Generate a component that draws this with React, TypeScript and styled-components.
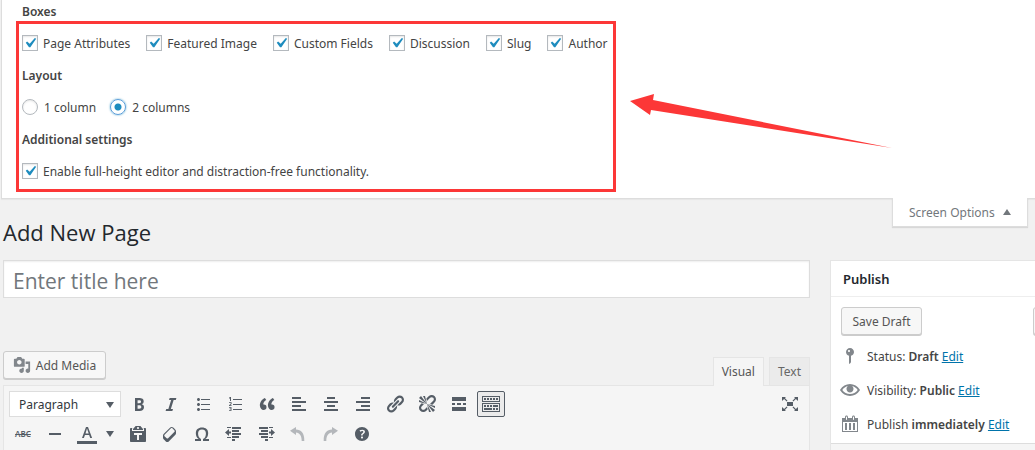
import React from 'react';
import styled, { createGlobalStyle, css } from 'styled-components';

const GlobalStyle = createGlobalStyle`
  *, *::before, *::after { box-sizing: border-box; }
  body {
    margin: 0;
    background: #f1f1f1;
    color: #444;
    font: 12px/20px "Segoe UI", "Noto Sans", sans-serif;
    overflow: hidden;
  }
  h1, h2, h3, p, fieldset, legend, ul { margin: 0; padding: 0; }
  button, input, select { font: inherit; color: inherit; margin: 0; }
`;

const Page = styled.div`
  display: flex;
  flex-direction: column;
  min-height: 100vh;
`;

/* Text beside an icon or a control, set on the control's baseline */
const Label = styled.span`
  padding-top: 2px;
  white-space: nowrap;
`;

/* Screen options */

const OptionsPanel = styled.section`
  position: relative;
  display: flex;
  flex-direction: column;
  gap: 10px;
  margin-left: 1px;
  padding: 0 20px 16px;
  background: #fff;
  border: 1px solid #ddd;
  border-width: 0 0 1px 1px;
  box-shadow: 0 1px 1px rgba(0, 0, 0, 0.04);
`;

const GroupTitle = styled.h3`
  height: 22px;
  font-size: 12px;
  line-height: 24px;
  font-weight: 600;
`;

const OptionRow = styled.div<{ $gap: number }>`
  display: flex;
  align-items: center;
  gap: ${(p) => p.$gap}px;
  height: 22px;
`;

const Option = styled.label<{ $gap?: number }>`
  display: flex;
  align-items: center;
  gap: ${(p) => p.$gap ?? 5}px;
`;

const Tick = styled.span`
  position: relative;
  display: flex;
  width: 16px;
  height: 16px;

  svg {
    position: absolute;
    inset: -2px 0 0 -2px;
    pointer-events: none;
    fill: #1e8cbe;
    visibility: hidden;
  }
  input:checked + svg { visibility: visible; }
`;

const controlBase = css`
  appearance: none;
  width: 16px;
  height: 16px;
  background: #fff;
  border: 1px solid #b4b9be;
  box-shadow: inset 0 1px 2px rgba(0, 0, 0, 0.1);
`;

const CheckInput = styled.input`
  ${controlBase}
`;

const RadioInput = styled.input`
  ${controlBase}
  border-radius: 50%;

  &:checked {
    border-color: #5b9dd9;
    box-shadow: 0 0 2px rgba(30, 140, 190, 0.8);
    background: radial-gradient(circle, #1e8cbe 0 3px, #fff 4px);
  }
`;

const Highlight = styled.div`
  position: absolute;
  left: 14px;
  top: 21px;
  width: 600px;
  height: 171px;
  border: 3px solid #fc3737;
  pointer-events: none;
`;

const Arrow = styled.svg`
  position: absolute;
  left: 628px;
  top: 92px;
  pointer-events: none;
`;

const PageHeader = styled.header`
  position: relative;
  display: flex;
  justify-content: space-between;
  align-items: flex-start;
  height: 62px;
  margin-top: -1px;
  padding: 0 7px 0 3px;
`;

const PageTitle = styled.h1`
  padding-top: 19px;
  font-family: "Segoe UI", "Open Sans", sans-serif;
  font-size: 22px;
  line-height: 30px;
  font-weight: 400;
  color: #23282d;
`;

const ScreenOptionsButton = styled.button`
  display: flex;
  align-items: center;
  justify-content: space-between;
  width: 136px;
  height: 29px;
  padding: 0 16px;
  background: #fff;
  border: 1px solid #ddd;
  border-top: 0;
  box-shadow: 0 1px 1px rgba(0, 0, 0, 0.1);
  color: #72777c;
`;

/* Main columns */

const Columns = styled.main`
  flex: 1;
  display: grid;
  grid-template-columns: minmax(0, 1fr) 205px;
  column-gap: 20px;
  padding-left: 3px;
`;

const EditorColumn = styled.div`
  display: flex;
  flex-direction: column;
`;

const TitleInput = styled.input`
  width: 100%;
  height: 38px;
  padding: 3px 9px 0;
  border: 1px solid #ddd;
  background: #fff;
  box-shadow: inset 0 1px 2px rgba(0, 0, 0, 0.07);
  font-family: "Segoe UI", "Open Sans", sans-serif;
  font-size: 21px;
  line-height: 30px;

  &::placeholder { color: #72777c; opacity: 1; }
`;

const EditorTools = styled.div`
  display: flex;
  align-items: flex-end;
  justify-content: space-between;
  margin-top: 53px;
  height: 34px;
`;

const WpButton = styled.button<{ $width: number }>`
  display: flex;
  align-items: center;
  justify-content: center;
  gap: 5px;
  width: ${(p) => p.$width}px;
  height: 28px;
  padding: 0;
  background: #f7f7f7;
  border: 1px solid #ccc;
  border-radius: 3px;
  box-shadow: 0 1px 0 #ccc;
  color: #555;
  white-space: nowrap;

  svg { fill: #82878c; }
`;

const MediaSlot = styled.div`
  align-self: flex-start;
`;

const Tabs = styled.div`
  position: relative;
  display: flex;
  gap: 5px;
  margin-bottom: -1px;
`;

const Tab = styled.button<{ $active?: boolean }>`
  height: ${(p) => (p.$active ? 29 : 28)}px;
  padding: 0 8px;
  background: ${(p) => (p.$active ? '#f5f5f5' : '#ebebeb')};
  border: 1px solid #e5e5e5;
  border-bottom: 0;
  color: ${(p) => (p.$active ? '#555' : '#666')};
`;

const Editor = styled.div`
  flex: 1;
  padding: 5px;
  background: #f5f5f5;
  border: 1px solid #e5e5e5;
  border-bottom: 0;
`;

const ToolRow = styled.div`
  display: flex;
  align-items: center;
  gap: 4px;
  height: 26px;
  margin-bottom: 4px;
`;

const FormatBox = styled.div`
  position: relative;
  width: 112px;
  height: 26px;

  svg {
    position: absolute;
    right: 7px;
    top: 11px;
    pointer-events: none;
  }
`;

const FormatSelect = styled.select`
  appearance: none;
  width: 100%;
  height: 26px;
  padding: 2px 9px 0;
  background: #fff;
  border: 1px solid #ddd;
  border-radius: 0;
  color: #32373c;
`;

const ToolButton = styled.button<{ $active?: boolean; $faded?: boolean; $wide?: boolean }>`
  display: flex;
  align-items: center;
  justify-content: ${(p) => (p.$wide ? 'flex-start' : 'center')};
  gap: 9px;
  width: ${(p) => (p.$wide ? 47 : 28)}px;
  height: 26px;
  padding: 0 0 0 ${(p) => (p.$wide ? 3 : 0)}px;
  background: ${(p) => (p.$active ? '#ebebeb' : 'transparent')};
  border: 1px solid ${(p) => (p.$active ? '#555d66' : 'transparent')};
  border-radius: 2px;
  opacity: ${(p) => (p.$faded ? 0.4 : 1)};

  svg { fill: #555d66; flex: none; }
`;

const FullscreenSlot = styled.div`
  display: flex;
  margin-left: auto;
`;

const StrikeText = styled.s`
  font-size: 8px;
  line-height: 12px;
  font-weight: 600;
  color: #555d66;
`;

/* Publish box */

const SideColumn = styled.aside`
  overflow: hidden;
  display: flex;
`;

const PublishBox = styled.section`
  flex: none;
  display: flex;
  flex-direction: column;
  width: 280px;
  background: #fff;
  border: 1px solid #e5e5e5;
`;

const BoxTitle = styled.h2`
  height: 36px;
  padding: 0 12px;
  border-bottom: 1px solid #eee;
  font-size: 13px;
  line-height: 36px;
  font-weight: 600;
  color: #23282d;
`;

const BoxActions = styled.div`
  display: flex;
  justify-content: space-between;
  padding: 10px 10px 4px;
`;

const StatusRow = styled.p`
  display: flex;
  align-items: center;
  gap: 7px;
  height: 34px;
  padding-left: 9px;

  svg { fill: #82878c; flex: none; }
  b { font-weight: 600; }
  a { color: #0073aa; text-decoration: underline; }
`;

const BoxFooter = styled.div`
  flex: 1;
  margin-top: 2px;
  background: #f5f5f5;
  border-top: 1px solid #ddd;
`;

const Icon = ({ d, size = 20 }: { d: string; size?: number }) => (
  <svg width={size} height={size} viewBox="0 0 20 20" aria-hidden="true">
    <path d={d} />
  </svg>
);

const Triangle = ({ up, color = '#555d66' }: { up?: boolean; color?: string }) => (
  <svg width="8" height="6" viewBox="0 0 8 6" aria-hidden="true">
    <path d={up ? 'M0 6L4 0l4 6z' : 'M0 0h8L4 6z'} style={{ fill: color }} />
  </svg>
);

const icons = {
  check: 'M14.83 4.89l1.34.94-5.81 8.38H9.02L5.78 9.67l1.34-1.25 2.57 2.4z',
  bold: 'M6 4v13h4.54c1.37 0 2.46-.33 3.26-1 .8-.66 1.2-1.58 1.2-2.77 0-.84-.17-1.51-.51-2.01s-.9-.85-1.67-1.03v-.09c.57-.1 1.02-.4 1.36-.9s.51-1.13.51-1.91c0-1.14-.39-1.98-1.17-2.5C12.75 4.26 11.5 4 9.78 4H6zm2.57 5.15V6.26h1.36c.73 0 1.27.11 1.61.32.34.22.51.58.51 1.07 0 .54-.16.92-.47 1.15s-.82.35-1.51.35h-1.5zm0 2.19h1.6c1.44 0 2.16.53 2.16 1.61 0 .6-.17 1.05-.51 1.34s-.86.43-1.57.43H8.57v-3.38z',
  italic: 'M14.78 6h-2.13l-2.8 9h2.12l-.62 2H4.6l.62-2h2.14l2.8-9H8.03l.62-2h6.75z',
  ul: 'M5.5 7C4.67 7 4 6.33 4 5.5 4 4.68 4.67 4 5.5 4 6.32 4 7 4.68 7 5.5 7 6.33 6.32 7 5.5 7zM8 5h9v1H8V5zm-2.5 7c-.83 0-1.5-.67-1.5-1.5C4 9.68 4.67 9 5.5 9c.82 0 1.5.68 1.5 1.5 0 .83-.68 1.5-1.5 1.5zM8 10h9v1H8v-1zm-2.5 7c-.83 0-1.5-.67-1.5-1.5 0-.82.67-1.5 1.5-1.5.82 0 1.5.68 1.5 1.5 0 .83-.68 1.5-1.5 1.5zM8 15h9v1H8v-1z',
  ol: 'M8 5h9v1H8zM8 10h9v1H8zM8 15h9v1H8zM5 3h1v4H5V4.200l-1 .5v-1zM4 8h2l.6.6V10L5.200 11.200h1.400V12H4v-.8l1.700-1.500V8.800H4zM4 13h2l.6.6v1l-.4.4.4.4v1l-.6.6H4v-.8h1.700v-.9H4.600v-.7h1.100v-.8H4z',
  quote: 'M9.49 13.22c0-.74-.2-1.38-.61-1.9-.62-.78-1.83-.88-2.53-.72-.29-1.65 1.11-3.75 2.92-4.65L7.88 4c-2.73 1.3-5.42 4.28-4.96 8.05C3.21 14.43 4.59 16 6.54 16c.85 0 1.56-.25 2.12-.75s.83-1.18.83-2.03zm8.05 0c0-.74-.2-1.38-.61-1.9-.63-.78-1.83-.88-2.53-.72-.29-1.65 1.11-3.75 2.92-4.65L15.93 4c-2.73 1.3-5.41 4.28-4.95 8.05.29 2.38 1.66 3.95 3.61 3.95.85 0 1.56-.25 2.12-.75s.83-1.18.83-2.03z',
  left: 'M12 5V3H3v2h9zm5 4V7H3v2h14zm-5 4v-2H3v2h9zm5 4v-2H3v2h14z',
  center: 'M14 5V3H6v2h8zm3 4V7H3v2h14zm-3 4v-2H6v2h8zm3 4v-2H3v2h14z',
  right: 'M17 5V3H8v2h9zm0 4V7H3v2h14zm0 4v-2H8v2h9zm0 4v-2H3v2h14z',
  link: 'M17.74 2.76c1.68 1.69 1.68 4.41 0 6.1l-1.53 1.52c-1.12 1.12-2.7 1.47-4.14 1.09l2.62-2.61.76-.77.76-.76c.84-.84.84-2.2 0-3.04-.84-.85-2.2-.85-3.04 0l-.77.76-3.38 3.38c-.37-1.44-.02-3.02 1.1-4.14l1.52-1.53c1.69-1.68 4.42-1.68 6.1 0zM8.59 13.43l5.34-5.34c.42-.42.42-1.1 0-1.52-.44-.43-1.13-.39-1.53 0l-5.33 5.34c-.42.42-.42 1.1 0 1.52.44.43 1.13.39 1.52 0zm-.76 2.29l4.14-4.15c.38 1.44.03 3.02-1.09 4.14l-1.52 1.53c-1.69 1.68-4.41 1.68-6.1 0-1.68-1.68-1.68-4.42 0-6.1l1.53-1.52c1.12-1.12 2.7-1.47 4.14-1.1l-4.14 4.15c-.85.84-.85 2.2 0 3.05.84.84 2.2.84 3.04 0z',
  unlink: 'M17.74 2.26c1.68 1.69 1.68 4.41 0 6.1l-1.53 1.52c-.32.33-.69.58-1.08.77L13 10l1.69-1.64.76-.77.76-.76c.84-.84.84-2.2 0-3.04-.84-.85-2.2-.85-3.04 0l-.77.76-.76.76L10 7l-.65-2.14c.19-.38.44-.75.77-1.07l1.52-1.53c1.69-1.68 4.42-1.68 6.1 0zM2 4l8 6-6-8zm4-2l4 8-2-8H6zM2 6l8 4-8-2V6zm7.36 7.69L10 13l.74 2.35-1.38 1.39c-1.69 1.68-4.41 1.68-6.1 0-1.68-1.68-1.68-4.42 0-6.1l1.39-1.38L7 10l-.69.64-1.52 1.53c-.85.84-.85 2.2 0 3.04.84.85 2.2.85 3.04 0zM18 16l-8-6 6 8zm-4 2l-4-8 2 8h2zm4-4l-8-4 8 2v2z',
  more: 'M17 7V3H3v4h14zM6 11V9H3v2h3zm6 0V9H8v2h4zm5 0V9h-3v2h3zm0 6v-4H3v4h14z',
  sink: 'M19 2v6H1V2h18zm-1 5V3H2v4h16zM5 4v2H3V4h2zm3 0v2H6V4h2zm3 0v2H9V4h2zm3 0v2h-2V4h2zm3 0v2h-2V4h2zm2 5v9H1V9h18zm-1 8v-7H2v7h16zM5 11v2H3v-2h2zm3 0v2H6v-2h2zm3 0v2H9v-2h2zm6 0v2h-5v-2h5zm-6 3v2H3v-2h8zm3 0v2h-2v-2h2zm3 0v2h-2v-2h2z',
  full: 'M2 3h4L4.900 4.100 7.500 6.700l-.8.8L4.100 4.900 2 7zM18 3h-4l1.100 1.100-2.600 2.600.8.8 2.600-2.600L18 7zM2 17h4l-1.100-1.100 2.600-2.600-.8-.8-2.600 2.600L2 13zM18 17h-4l1.100-1.100-2.600-2.600.8-.8 2.600 2.600L18 13zM7 8h6v4H7z',
  hr: 'M4 9h12v2H4z',
  color: 'M13.23 14h1.9L11 3H9L5 14h1.88l1.07-3h4.18zm-1.53-4.54H8.51L10 4.600zM0 17h20v3H0z',
  paste: 'M12.38 2L15 5v1H5V5l2.64-3h4.74zM10 5c.55 0 1-.44 1-1 0-.55-.45-1-1-1s-1 .45-1 1c0 .56.45 1 1 1zm5.45-1H17c.55 0 1 .45 1 1v12c0 .56-.45 1-1 1H3c-.55 0-1-.44-1-1V5c0-.55.45-1 1-1h1.55L4 4.63V7h12V4.63zM14 11V9H6v2h3v5h2v-5h3z',
  eraser: 'M14.29 4.59l1.1 1.11c.41.4.61.94.61 1.47v2.12c0 .53-.2 1.07-.61 1.47l-6.63 6.63c-.4.41-.94.61-1.47.61s-1.07-.2-1.47-.61l-1.11-1.1-1.1-1.11c-.41-.4-.61-.94-.61-1.47v-2.12c0-.54.2-1.07.61-1.48l6.63-6.62c.4-.41.94-.61 1.47-.61s1.06.2 1.47.61zm-6.21 9.7l6.42-6.42c.39-.39.39-1.03 0-1.43L12.36 4.3c-.19-.19-.45-.29-.72-.29s-.52.1-.71.29l-6.42 6.42c-.39.4-.39 1.04 0 1.43l2.14 2.14c.38.38 1.04.38 1.43 0z',
  omega: 'M10 5.4c1.27 0 2.24.36 2.91 1.08.66.71 1 1.76 1 3.13 0 1.28-.23 2.37-.69 3.27-.47.89-1.27 1.52-2.22 2.12v2h6v-2h-3.69c.92-.64 1.62-1.34 2.12-2.34.49-1.01.74-2.13.74-3.35 0-1.78-.55-3.19-1.65-4.22S11.92 3.54 10 3.54s-3.43.53-4.52 1.57c-1.1 1.04-1.65 2.44-1.65 4.2 0 1.21.24 2.31.73 3.33.48 1.01 1.19 1.71 2.1 2.36H3v2h6v-2c-.98-.64-1.8-1.28-2.24-2.17-.45-.89-.67-1.96-.67-3.22 0-1.37.33-2.41 1-3.13C7.75 5.76 8.72 5.4 10 5.4z',
  outdent: 'M3 3h4v1H3zM8 3h9v2H8zM8 6h7v2H8zM8 9h9v2H8zM8 12h7v2H8zM3 13h4v1H3zM8 15h3v2H8zM1 8.500L5 5v2.500h2v2H5V12z',
  indent: 'M3 3h9v2H3zM13 3h4v1h-4zM5 6h7v2H5zM3 9h9v2H3zM5 12h7v2H5zM9 15h3v2H9zM13 13h4v1h-4zM19 8.500L15 5v2.500h-2v2h2V12z',
  undo: 'M8 3v2.600C13 5.800 16.500 9 16.300 17h-2.600c0-5.500-2-8-5.700-8.500V11L2 6.800z',
  redo: 'M12 3v2.600C7 5.800 3.500 9 3.700 17h2.600c0-5.500 2-8 5.700-8.500V11l6-4.200z',
  help: 'M17 10c0-3.87-3.14-7-7-7-3.87 0-7 3.13-7 7s3.13 7 7 7c3.86 0 7-3.13 7-7zm-6.3 1.48H9.14v-.43c0-.38.08-.7.24-.98s.46-.57.88-.89c.41-.29.68-.53.81-.71.14-.18.2-.39.2-.62 0-.25-.09-.44-.28-.58-.19-.13-.45-.19-.79-.19-.58 0-1.25.19-2 .57l-.64-1.28c.87-.49 1.8-.74 2.77-.74.81 0 1.45.2 1.92.58.48.39.71.91.71 1.55 0 .43-.09.8-.29 1.11-.19.32-.57.67-1.11 1.06-.38.28-.61.49-.71.63-.1.15-.15.34-.15.57v.35zm-1.47 2.74c-.18-.17-.27-.42-.27-.73 0-.33.08-.58.26-.75s.43-.25.77-.25c.32 0 .57.09.75.26s.27.42.27.74c0 .3-.09.55-.27.72-.18.18-.43.27-.75.27-.33 0-.58-.09-.76-.26z',
  media: 'M13 11V4c0-.55-.45-1-1-1h-1.67L9 1H5L3.67 3H2c-.55 0-1 .45-1 1v7c0 .55.45 1 1 1h10c.55 0 1-.45 1-1zM7 4.500c1.38 0 2.500 1.120 2.500 2.500S8.380 9.500 7 9.500 4.500 8.380 4.500 7 5.620 4.500 7 4.500zM14 6h5v10.500c0 1.380-1.120 2.500-2.500 2.500S14 17.880 14 16.500s1.120-2.500 2.500-2.500c.17 0 .34.02.5.05V9h-3V6zm-4 8.050V13h2v3.500c0 1.380-1.120 2.500-2.500 2.500S7 17.880 7 16.500 8.120 14 9.500 14c.17 0 .34.02.5.05z',
  eye: 'M19.7 9.4C17.7 6 14 3.9 10 3.9S2.3 6 .3 9.4L0 10l.3.6c2 3.4 5.7 5.5 9.700 5.5s7.700-2.100 9.700-5.500l.3-.6-.3-.6zM10 14.100c-3.100 0-6-1.600-7.700-4.100C3.600 8 5.700 6.600 8 6.100c-.9.6-1.500 1.700-1.500 2.900 0 1.900 1.600 3.500 3.500 3.500s3.500-1.600 3.500-3.500c0-1.200-.6-2.300-1.500-2.900 2.300.5 4.400 1.900 5.700 3.900-1.700 2.500-4.600 4.100-7.700 4.100z',
  calendar: 'M15 4h3v14H2V4h3V3c0-.83.67-1.5 1.5-1.5S8 2.170 8 3v1h4V3c0-.83.67-1.5 1.5-1.5S15 2.170 15 3v1zM6 3v2.500c0 .28.22.5.5.5s.5-.22.5-.5V3c0-.28-.22-.5-.5-.5S6 2.720 6 3zm7 0v2.500c0 .28.22.5.5.5s.5-.22.5-.5V3c0-.28-.22-.5-.5-.5s-.5.22-.5.5zm4 14V8H3v9h14zM7 16V9H5v7h2zm4 0V9H9v7h2zm4 0V9h-2v7h2z',
  pin: 'M14 6c0 1.860-1.280 3.410-3 3.860V16c0 1-2 2-2 2V9.860c-1.720-.45-3-2-3-3.860 0-2.210 1.790-4 4-4s4 1.790 4 4zM8 5c0 .55.45 1 1 1s1-.45 1-1-.45-1-1-1-1 .45-1 1z',
};

const Checkbox = ({ label }: { label: string }) => (
  <Option>
    <Tick>
      <CheckInput type="checkbox" defaultChecked />
      <Icon d={icons.check} />
    </Tick>
    <Label>{label}</Label>
  </Option>
);

const boxes = ['Page Attributes', 'Featured Image', 'Custom Fields', 'Discussion', 'Slug', 'Author'];

const firstRowTools: [string, string][] = [
  ['Bold', icons.bold],
  ['Italic', icons.italic],
  ['Bulleted list', icons.ul],
  ['Numbered list', icons.ol],
  ['Blockquote', icons.quote],
  ['Align left', icons.left],
  ['Align center', icons.center],
  ['Align right', icons.right],
  ['Insert link', icons.link],
  ['Remove link', icons.unlink],
  ['Read more', icons.more],
];

const secondRowTools: [string, string][] = [
  ['Paste as text', icons.paste],
  ['Clear formatting', icons.eraser],
  ['Special character', icons.omega],
  ['Decrease indent', icons.outdent],
  ['Increase indent', icons.indent],
];

const statuses = [
  { icon: icons.pin, label: 'Status:', value: 'Draft' },
  { icon: icons.eye, label: 'Visibility:', value: 'Public' },
  { icon: icons.calendar, label: 'Publish', value: 'immediately' },
];

export default function App() {
  return (
    <Page>
      <GlobalStyle />
      <OptionsPanel aria-label="Screen options">
        <GroupTitle>Boxes</GroupTitle>
        <OptionRow $gap={16}>
          {boxes.map((b) => (
            <Checkbox key={b} label={b} />
          ))}
        </OptionRow>
        <GroupTitle>Layout</GroupTitle>
        <OptionRow $gap={14}>
          <Option $gap={6}>
            <RadioInput type="radio" name="columns" />
            <Label>1 column</Label>
          </Option>
          <Option $gap={6}>
            <RadioInput type="radio" name="columns" defaultChecked />
            <Label>2 columns</Label>
          </Option>
        </OptionRow>
        <GroupTitle>Additional settings</GroupTitle>
        <OptionRow $gap={16}>
          <Checkbox label="Enable full-height editor and distraction-free functionality." />
        </OptionRow>
        <Highlight />
        <Arrow width="264" height="58" viewBox="0 0 264 58" aria-hidden="true">
          <path d="M0 9L24 2l-1 6L262 56 21 18l-1 5z" fill="#fc3737" />
        </Arrow>
      </OptionsPanel>

      <PageHeader>
        <PageTitle>Add New Page</PageTitle>
        <ScreenOptionsButton type="button">
          <Label>Screen Options</Label>
          <Triangle up color="#72777c" />
        </ScreenOptionsButton>
      </PageHeader>

      <Columns>
        <EditorColumn>
          <TitleInput type="text" placeholder="Enter title here" aria-label="Title" />
          <EditorTools>
            <MediaSlot>
              <WpButton type="button" $width={103}>
                <Icon d={icons.media} size={18} />
                <Label>Add Media</Label>
              </WpButton>
            </MediaSlot>
            <Tabs>
              <Tab type="button" $active><Label>Visual</Label></Tab>
              <Tab type="button"><Label>Text</Label></Tab>
            </Tabs>
          </EditorTools>
          <Editor>
            <ToolRow>
              <FormatBox>
                <FormatSelect aria-label="Format">
                  <option>Paragraph</option>
                </FormatSelect>
                <Triangle />
              </FormatBox>
              {firstRowTools.map(([name, d]) => (
                <ToolButton key={name} type="button" aria-label={name}>
                  <Icon d={d} />
                </ToolButton>
              ))}
              <ToolButton type="button" aria-label="Toolbar toggle" $active>
                <Icon d={icons.sink} />
              </ToolButton>
              <FullscreenSlot>
                <ToolButton type="button" aria-label="Distraction-free writing">
                  <Icon d={icons.full} />
                </ToolButton>
              </FullscreenSlot>
            </ToolRow>
            <ToolRow>
              <ToolButton type="button" aria-label="Strikethrough">
                <StrikeText>ABC</StrikeText>
              </ToolButton>
              <ToolButton type="button" aria-label="Horizontal line">
                <Icon d={icons.hr} />
              </ToolButton>
              <ToolButton type="button" aria-label="Text color" $wide>
                <Icon d={icons.color} />
                <Triangle />
              </ToolButton>
              {secondRowTools.map(([name, d]) => (
                <ToolButton key={name} type="button" aria-label={name}>
                  <Icon d={d} />
                </ToolButton>
              ))}
              <ToolButton type="button" aria-label="Undo" $faded>
                <Icon d={icons.undo} />
              </ToolButton>
              <ToolButton type="button" aria-label="Redo" $faded>
                <Icon d={icons.redo} />
              </ToolButton>
              <ToolButton type="button" aria-label="Keyboard shortcuts">
                <Icon d={icons.help} />
              </ToolButton>
            </ToolRow>
          </Editor>
        </EditorColumn>

        <SideColumn>
          <PublishBox>
            <BoxTitle>Publish</BoxTitle>
            <BoxActions>
              <WpButton type="button" $width={81}><Label>Save Draft</Label></WpButton>
              <WpButton type="button" $width={66} aria-label="Preview" />
            </BoxActions>
            {statuses.map((s) => (
              <StatusRow key={s.label}>
                <Icon d={s.icon} />
                <Label>
                  {s.label} <b>{s.value}</b> <a href="#edit">Edit</a>
                </Label>
              </StatusRow>
            ))}
            <BoxFooter />
          </PublishBox>
        </SideColumn>
      </Columns>
    </Page>
  );
}
